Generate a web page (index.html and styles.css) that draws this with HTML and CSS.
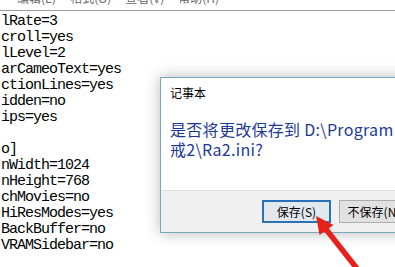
FILE: index.html
```html
<!DOCTYPE html>
<html lang="zh-CN">
<head>
<meta charset="utf-8">
<title>记事本</title>
<link rel="stylesheet" href="styles.css">
</head>
<body>
<div class="page">
  <div class="menubar">
    <span class="menu-item">编辑(E)</span>
    <span class="menu-item">格式(O)</span>
    <span class="menu-item">查看(V)</span>
    <span class="menu-item">帮助(H)</span>
  </div>
  <pre class="editor">lRate=3
croll=yes
lLevel=2
arCameoText=yes
ctionLines=yes
idden=no
ips=yes

o]
nWidth=1024
nHeight=768
chMovies=no
HiResModes=yes
BackBuffer=no
VRAMSidebar=no</pre>

  <div class="dialog">
    <div class="dialog-main">
      <div class="dialog-title">记事本</div>
      <div class="dialog-msg">
        <div class="msg-line">是否将更改保存到 D:\Program Files\红色警</div>
        <div class="msg-line">戒2\Ra2.ini?</div>
      </div>
    </div>
    <div class="dialog-footer">
      <button class="btn btn-default">保存(S)</button>
      <button class="btn">不保存(N)</button>
    </div>
  </div>

  <svg class="arrow" width="395" height="267" viewBox="0 0 395 267">
    <line x1="325" y1="228" x2="366" y2="280" stroke="#e8201c" stroke-width="5.5"/>
    <polygon points="316,216 319.5,235 333.5,225" fill="#e8201c"/>
  </svg>
</div>
</body>
</html>
```

FILE: styles.css
```css
* { box-sizing: border-box; }
html, body { margin: 0; padding: 0; }
body {
  width: 395px;
  height: 267px;
  overflow: hidden;
  background: #ffffff;
}
.page {
  position: relative;
  width: 395px;
  height: 267px;
  overflow: hidden;
}
.menubar {
  height: 11px;
  overflow: hidden;
  display: flex;
  align-items: flex-end;
  gap: 14px;
  padding-left: 17px;
  padding-bottom: 4px;
  border-bottom: 1px solid #9c9c9c;
  font-family: "Noto Sans CJK SC", sans-serif;
  font-size: 12px;
  color: #6a6a6a;
}
.menu-item {
  line-height: 16px;
  flex: none;
}
.editor {
  margin: 0;
  padding: 3px 0 0 1px;
  font-family: "Liberation Mono", "DejaVu Sans Mono", monospace;
  font-size: 15px;
  letter-spacing: -1px;
  line-height: 16px;
  color: #000;
}
.dialog {
  position: absolute;
  left: 160px;
  top: 77px;
  width: 270px;
  height: 156px;
  border: 1px solid #78a8b8;
  background: #ffffff;
  box-shadow: 0 0 14px rgba(0, 0, 0, 0.28);
  display: flex;
  flex-direction: column;
  font-family: "Noto Sans CJK SC", sans-serif;
}
.dialog-main {
  flex: 1;
  padding: 7px 0 0 9px;
  overflow: hidden;
}
.dialog-title {
  font-size: 12px;
  line-height: 16px;
  color: #000;
}
.dialog-msg {
  margin-top: 18px;
  font-size: 16px;
  line-height: 20px;
  letter-spacing: 0.3px;
  color: #1c3a94;
}
.msg-line {
  white-space: nowrap;
}
.dialog-footer {
  height: 42px;
  background: #f0f0f0;
  border-top: 1px solid #dfdfdf;
  display: flex;
  align-items: flex-start;
  gap: 8px;
  padding: 9px 0 0 101px;
}
.btn {
  flex: none;
  width: 70px;
  height: 23px;
  margin: 0;
  padding: 0;
  border: 1px solid #adadad;
  background: #e1e1e1;
  font-family: "Noto Sans CJK SC", sans-serif;
  font-size: 12px;
  line-height: 19px;
  color: #000;
}
.btn-default {
  width: 69px;
  border: 2px solid #2a72b8;
  background: #e3e8ee;
}
.arrow {
  position: absolute;
  left: 0;
  top: 0;
}
```
